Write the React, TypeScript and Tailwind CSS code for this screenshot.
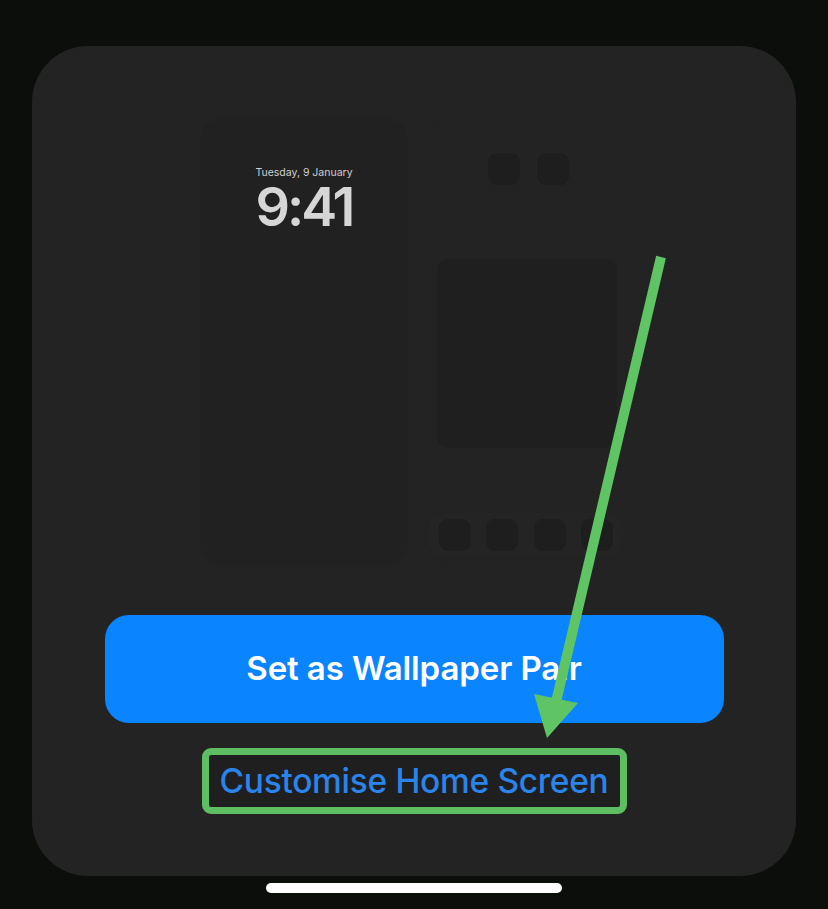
import React from "react";

function Icon({ className = "" }: { className?: string }) {
  return <div className={`h-[32px] w-[32px] rounded-[9px] bg-[#1e1e1e] ${className}`} />;
}

export default function App() {
  return (
    <div className="relative h-[909px] w-[828px] overflow-hidden bg-[#0c0e0b] pt-[46px]" style={{ fontFamily: "Inter, 'Noto Sans', sans-serif" }}>
      <div className="mx-[32px] flex h-[830px] flex-col items-center rounded-[56px] bg-[#232323]">
        {/* previews */}
        <div className="mt-[73px] flex items-start gap-[21px] pl-[1px]">
          {/* lock screen */}
          <div className="flex h-[446px] w-[208px] flex-col items-center rounded-[22px] bg-[#212121] pt-[48px]">
            <div className="text-[10.5px] leading-[12px] text-[#cfcfcf]">Tuesday, 9 January</div>
            <div className="mt-[6px] text-[54px] font-semibold leading-[44px] tracking-[-3px] text-[#d6d6d6]">9:41</div>
          </div>
          {/* home screen */}
          <div className="flex h-[446px] w-[200px] flex-col rounded-[22px] bg-[#232323]">
            <div className="mt-[34px] grid grid-cols-4 gap-x-[15.5px] px-[11px]">
              <div />
              <Icon />
              <Icon />
              <div />
            </div>
            <div className="ml-[8px] mt-[74px] h-[189px] w-[180px] rounded-[12px] bg-[#1f1f1f]" />
            <div className="mt-[65px] flex h-[44px] w-[194px] items-center gap-[15.5px] rounded-[14px] bg-[#242424] px-[10px]">
              <Icon />
              <Icon />
              <Icon />
              <Icon />
            </div>
          </div>
        </div>

        {/* button */}
        <div className="mt-[50px] flex h-[108px] w-[619px] items-center justify-center rounded-[24px] bg-[#0a84ff]">
          <span className="text-[33px] font-semibold tracking-[-0.1px] text-white">Set as Wallpaper Pair</span>
        </div>

        {/* customise */}
        <div className="mt-[25px] flex h-[66px] w-[425px] items-center justify-center rounded-[9px] border-[7px] border-[#5dbf62] bg-[#1f1f1f]">
          <span className="text-[33.5px] font-medium tracking-[-0.3px] text-[#2a84ea]">Customise Home Screen</span>
        </div>
      </div>

      {/* home indicator */}
      <div className="mx-auto mt-[7px] h-[10px] w-[296px] rounded-full bg-white" />

      {/* arrow overlay */}
      <svg className="pointer-events-none absolute left-0 top-0" width="828" height="909" viewBox="0 0 828 909">
        <line x1="661" y1="257" x2="556" y2="702" stroke="#5fc463" strokeWidth="10" />
        <polygon points="534,694 578,703 547,738" fill="#5fc463" />
      </svg>
    </div>
  );
}
